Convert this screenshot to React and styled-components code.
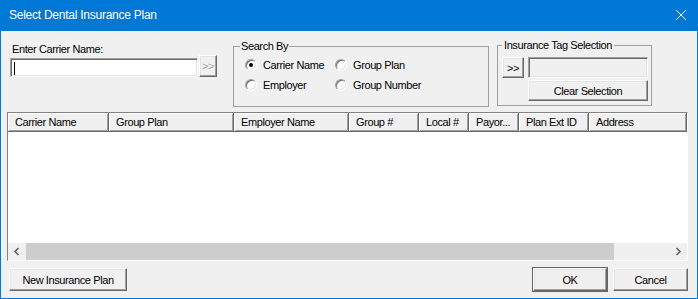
import React from "react";
import styled, { createGlobalStyle } from "styled-components";

const GlobalStyle = createGlobalStyle`
  html, body {
    margin: 0;
    padding: 0;
    background: #ffffff;
  }
  * {
    box-sizing: border-box;
  }
`;

const columns = [
  { label: "Carrier Name", width: 101 },
  { label: "Group Plan", width: 125 },
  { label: "Employer Name", width: 115 },
  { label: "Group #", width: 70 },
  { label: "Local #", width: 50 },
  { label: "Payor...", width: 50 },
  { label: "Plan Ext ID", width: 70 },
  { label: "Address" },
];

const Chevron = ({ dir }) => (
  <svg width="17" height="17" viewBox="0 0 17 17">
    <polyline
      points={dir === "left" ? "10.5,5 7,8.5 10.5,12" : "6.5,5 10,8.5 6.5,12"}
      fill="none"
      stroke="#606060"
      strokeWidth="1.6"
    />
  </svg>
);

const App = () => {
  return (
    <>
      <GlobalStyle />
      <Window>
        <TitleBar>
          <Title>Select Dental Insurance Plan</Title>
          <CloseBtn>
            <svg width="12" height="12" viewBox="0 0 12 12">
              <path d="M1 1 L11 11 M11 1 L1 11" stroke="#fff" strokeWidth="1" />
            </svg>
          </CloseBtn>
        </TitleBar>

        <Body>
          <TopRow>
            <CarrierBlock>
              <Label>Enter Carrier Name:</Label>
              <InputRow>
                <TextInput>
                  <Caret />
                </TextInput>
                <Button w={18} h={22} disabled>
                  &gt;&gt;
                </Button>
              </InputRow>
            </CarrierBlock>

            <SearchBox>
              <Legend>Search By</Legend>
              <RadioGrid>
                <RadioItem>
                  <Radio checked />
                  Carrier Name
                </RadioItem>
                <RadioItem>
                  <Radio />
                  Group Plan
                </RadioItem>
                <RadioItem>
                  <Radio />
                  Employer
                </RadioItem>
                <RadioItem>
                  <Radio />
                  Group Number
                </RadioItem>
              </RadioGrid>
            </SearchBox>

            <TagBox>
              <TagLegend>Insurance Tag Selection</TagLegend>
              <TagGrid>
                <Button w={22} h={21}>
                  &gt;&gt;
                </Button>
                <TagField />
                <span />
                <Button w={120} h={21}>
                  Clear Selection
                </Button>
              </TagGrid>
            </TagBox>
          </TopRow>

          <Grid>
            <HeaderRow>
              {columns.map((c) => (
                <HeaderCell key={c.label} w={c.width}>
                  {c.label}
                </HeaderCell>
              ))}
            </HeaderRow>
            <GridBody />
            <ScrollBar>
              <ScrollArrow>
                <Chevron dir="left" />
              </ScrollArrow>
              <Track>
                <Thumb />
              </Track>
              <ScrollArrow>
                <Chevron dir="right" />
              </ScrollArrow>
            </ScrollBar>
          </Grid>

          <BottomRow>
            <Button w={118} h={23}>
              New Insurance Plan
            </Button>
            <Spacer />
            <DefaultButton>
              <Button w={74} h={23}>
                OK
              </Button>
            </DefaultButton>
            <Button w={75} h={23}>
              Cancel
            </Button>
          </BottomRow>
        </Body>
      </Window>
    </>
  );
};

export default App;

const Window = styled.div`
  width: 698px;
  height: 299px;
  display: flex;
  flex-direction: column;
  background: #f0f0f0;
  border: 1px solid #0078d7;
  border-top: none;
  font-family: "Liberation Sans", Arial, sans-serif;
  font-size: 11px;
  letter-spacing: -0.4px;
  color: #000;
`;

const TitleBar = styled.div`
  height: 31px;
  margin: 0 -1px;
  flex: none;
  display: flex;
  align-items: center;
  justify-content: space-between;
  background: #0078d7;
  padding: 0 11px 1px 9px;
`;

const Title = styled.div`
  color: #fff;
  font-size: 12px;
  letter-spacing: -0.25px;
  line-height: 14px;
`;

const CloseBtn = styled.div`
  width: 12px;
  height: 12px;
  display: flex;
`;

const Body = styled.div`
  flex: 1;
  display: flex;
  flex-direction: column;
  padding-bottom: 6px;
`;

const TopRow = styled.div`
  height: 75px;
  flex: none;
  display: flex;
  align-items: flex-start;
`;

const CarrierBlock = styled.div`
  margin: 12px 0 0 9px;
  display: flex;
  flex-direction: column;
`;

const Label = styled.div`
  line-height: 12px;
  padding-left: 2px;
`;

const InputRow = styled.div`
  display: flex;
  align-items: flex-end;
  gap: 1px;
`;

const Sunken = styled.div`
  border: 1px solid;
  border-color: #a0a0a0 #ffffff #ffffff #a0a0a0;
  box-shadow: inset 1px 1px #696969, inset -1px -1px #e3e3e3;
`;

const TextInput = styled(Sunken)`
  width: 188px;
  height: 19px;
  background: #fff;
  padding: 2px 0 0 2px;
`;

const Caret = styled.div`
  width: 1px;
  height: 13px;
  margin: 1px 0 0 1px;
  background: #000;
`;

const TagField = styled(Sunken)`
  width: 120px;
  height: 21px;
  background: #f0f0f0;
`;

const Button = styled.button`
  width: ${(p) => p.w}px;
  height: ${(p) => p.h}px;
  flex: none;
  padding: 0;
  margin: 0;
  background: #f0f0f0;
  border: 1px solid;
  border-color: #ffffff #696969 #696969 #ffffff;
  box-shadow: inset -1px -1px #a0a0a0, inset 1px 1px #e3e3e3;
  font-family: inherit;
  font-size: 11px;
  letter-spacing: -0.4px;
  color: #000;
  line-height: 12px;
  &:disabled {
    color: #a0a0a0;
    text-shadow: 1px 1px #fff;
  }
`;

const DefaultButton = styled.div`
  border: 1px solid #646464;
  display: flex;
  margin-right: 5px;
`;

const GroupBox = styled.fieldset`
  margin: 0;
  border: 1px solid #a0a0a0;
  min-width: 0;
`;

const SearchBox = styled(GroupBox)`
  width: 256px;
  height: 67px;
  margin: 9px 0 0 16px;
  padding: 0 0 0 6px;
`;

const TagBox = styled(GroupBox)`
  width: 155px;
  height: 67px;
  margin: 8px 0 0 8px;
  padding: 0 0 0 4px;
`;

const Legend = styled.legend`
  padding: 0 1px;
  line-height: 13px;
`;

const TagLegend = styled(Legend)`
  padding: 0 2px;
`;

const RadioGrid = styled.div`
  display: grid;
  grid-template-columns: 90px auto;
  row-gap: 7px;
  margin: 5px 0 0 5px;
`;

const RadioItem = styled.label`
  display: flex;
  align-items: center;
  gap: 6px;
  height: 13px;
`;

const Radio = styled.span`
  width: 12px;
  height: 12px;
  flex: none;
  border-radius: 50%;
  background: #fff;
  border: 1px solid;
  border-color: #a0a0a0 #ffffff #ffffff #a0a0a0;
  box-shadow: inset 1px 1px #696969, inset -1px -1px #e3e3e3;
  display: flex;
  align-items: center;
  justify-content: center;
  &::after {
    content: "";
    width: 4px;
    height: 4px;
    border-radius: 50%;
    background: ${(p) => (p.checked ? "#000" : "transparent")};
  }
`;

const TagGrid = styled.div`
  display: grid;
  grid-template-columns: 22px 120px;
  column-gap: 4px;
  row-gap: 2px;
  margin-top: 5px;
`;

const Grid = styled.div`
  width: 681px;
  height: 149px;
  margin: 6px 0 0 6px;
  flex: none;
  display: flex;
  flex-direction: column;
  background: #fff;
  border: 1px solid;
  border-color: #828282 #ffffff #ffffff #828282;
`;

const HeaderRow = styled.div`
  height: 19px;
  flex: none;
  display: flex;
`;

const HeaderCell = styled.div`
  width: ${(p) => (p.w ? `${p.w}px` : "auto")};
  flex: ${(p) => (p.w ? "none" : "1")};
  display: flex;
  align-items: center;
  padding: 0 0 1px 7px;
  background: #f0f0f0;
  border-right: 1px solid #696969;
  border-bottom: 1px solid #696969;
  box-shadow: inset 1px 1px #fff, inset -1px -1px #a0a0a0;
  white-space: nowrap;
  overflow: hidden;
`;

const GridBody = styled.div`
  flex: 1;
  background: #fff;
`;

const ScrollBar = styled.div`
  height: 17px;
  flex: none;
  display: flex;
  background: #f0f0f0;
`;

const ScrollArrow = styled.div`
  width: 17px;
  height: 17px;
  flex: none;
  display: flex;
`;

const Track = styled.div`
  flex: 1;
  display: flex;
  padding-left: 1px;
`;

const Thumb = styled.div`
  width: 588px;
  height: 17px;
  background: #cdcdcd;
`;

const BottomRow = styled.div`
  margin: 6px 9px 0 8px;
  height: 25px;
  display: flex;
  align-items: center;
`;

const Spacer = styled.div`
  flex: 1;
`;
